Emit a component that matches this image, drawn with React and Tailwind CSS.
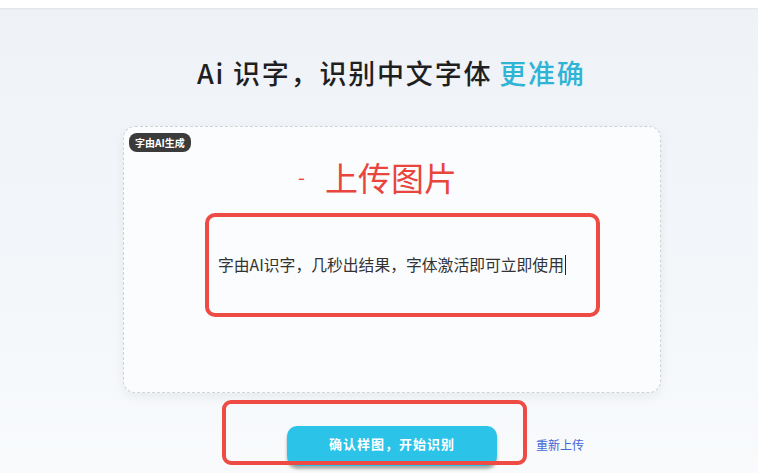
export default function App() {
  return (
    <div
      className="relative h-[473px] w-[758px] overflow-hidden bg-gradient-to-b from-[#eef2f7] to-[#f8fafc]"
      style={{ fontFamily: '"Noto Sans CJK SC", "Noto Sans", sans-serif' }}
    >
      <div className="h-[8px] bg-white shadow-[0_1px_2px_rgba(0,0,0,0.06)]" />

      <h1 className="ml-[197px] mt-[46px] flex h-[36px] items-center text-[27px] font-medium leading-none tracking-[1.8px] text-[#1f1f1f]">
        <span>Ai 识字，识别中文字体</span>
        <span className="ml-[7px] text-[#2fb4d6]">更准确</span>
      </h1>

      <div className="relative ml-[123px] mt-[36px] h-[267px] w-[538px] rounded-[12px] border border-dashed border-[#cfd3d8] bg-[#fbfcfd] shadow-[0_4px_12px_rgba(0,0,0,0.06)]">
        <span className="absolute left-[5px] top-[6px] rounded-[8px] bg-[#3b3b3b] px-[6px] py-[3px] text-[10px] font-bold leading-[13px] text-white">
          字由AI生成
        </span>

        <div className="ml-[174px] mt-[30px] flex h-[40px] items-center">
          <span className="text-[20px] leading-none text-[#e8453c]">-</span>
          <span className="ml-[20px] text-[33px] leading-none text-[#e8453c]">上传图片</span>
        </div>

        <div className="ml-[81px] mt-[16px] flex h-[104px] w-[395px] items-center rounded-[10px] border-4 border-[#ee4b45] pl-[9px]">
          <span className="text-[15.8px] leading-none text-[#333]">字由AI识字，几秒出结果，字体激活即可立即使用</span>
          <span className="ml-[1px] h-[20px] w-[1px] bg-[#222]" />
        </div>
      </div>

      <div className="ml-[222px] mt-[7px] flex items-center">
        <div className="relative h-[65px] w-[305px]">
          <button className="ml-[65px] mt-[26px] flex h-[40px] w-[210px] items-center justify-center rounded-[10px] bg-[#2cc3e8] pb-[4px] text-[13px] font-bold tracking-[1px] text-white shadow-[0_3px_3px_rgba(80,80,60,0.45)]">
            确认样图，开始识别
          </button>
          <div className="pointer-events-none absolute inset-0 rounded-[9px] border-4 border-[#ee4b45]" />
        </div>
        <a className="ml-[9px] mt-[24px] text-[12px] text-[#4466d6]">重新上传</a>
      </div>
    </div>
  );
}
